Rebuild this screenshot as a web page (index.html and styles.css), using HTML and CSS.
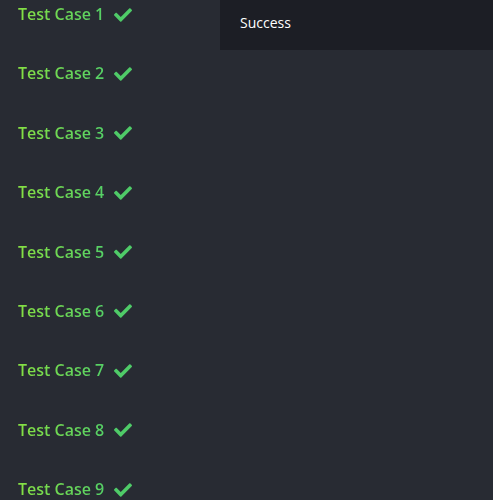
FILE: index.html
```html
<!DOCTYPE html>
<html>
<head>
<meta charset="utf-8">
<link rel="stylesheet" href="styles.css">
</head>
<body>
<div class="page">
  <ul class="cases">
    <li class="case"><span class="label">Test Case 1</span><svg class="check" viewBox="0 0 512 512"><path d="M173.9 439.4L7.5 273c-10-10-10-26.2 0-36.2l36.2-36.2c10-10 26.2-10 36.2 0L192 312.7 432.1 72.6c10-10 26.2-10 36.2 0l36.2 36.2c10 10 10 26.2 0 36.2L210.1 439.4c-10 10-26.2 10-36.2 0z"/></svg></li>
    <li class="case"><span class="label">Test Case 2</span><svg class="check" viewBox="0 0 512 512"><path d="M173.9 439.4L7.5 273c-10-10-10-26.2 0-36.2l36.2-36.2c10-10 26.2-10 36.2 0L192 312.7 432.1 72.6c10-10 26.2-10 36.2 0l36.2 36.2c10 10 10 26.2 0 36.2L210.1 439.4c-10 10-26.2 10-36.2 0z"/></svg></li>
    <li class="case"><span class="label">Test Case 3</span><svg class="check" viewBox="0 0 512 512"><path d="M173.9 439.4L7.5 273c-10-10-10-26.2 0-36.2l36.2-36.2c10-10 26.2-10 36.2 0L192 312.7 432.1 72.6c10-10 26.2-10 36.2 0l36.2 36.2c10 10 10 26.2 0 36.2L210.1 439.4c-10 10-26.2 10-36.2 0z"/></svg></li>
    <li class="case"><span class="label">Test Case 4</span><svg class="check" viewBox="0 0 512 512"><path d="M173.9 439.4L7.5 273c-10-10-10-26.2 0-36.2l36.2-36.2c10-10 26.2-10 36.2 0L192 312.7 432.1 72.6c10-10 26.2-10 36.2 0l36.2 36.2c10 10 10 26.2 0 36.2L210.1 439.4c-10 10-26.2 10-36.2 0z"/></svg></li>
    <li class="case"><span class="label">Test Case 5</span><svg class="check" viewBox="0 0 512 512"><path d="M173.9 439.4L7.5 273c-10-10-10-26.2 0-36.2l36.2-36.2c10-10 26.2-10 36.2 0L192 312.7 432.1 72.6c10-10 26.2-10 36.2 0l36.2 36.2c10 10 10 26.2 0 36.2L210.1 439.4c-10 10-26.2 10-36.2 0z"/></svg></li>
    <li class="case"><span class="label">Test Case 6</span><svg class="check" viewBox="0 0 512 512"><path d="M173.9 439.4L7.5 273c-10-10-10-26.2 0-36.2l36.2-36.2c10-10 26.2-10 36.2 0L192 312.7 432.1 72.6c10-10 26.2-10 36.2 0l36.2 36.2c10 10 10 26.2 0 36.2L210.1 439.4c-10 10-26.2 10-36.2 0z"/></svg></li>
    <li class="case"><span class="label">Test Case 7</span><svg class="check" viewBox="0 0 512 512"><path d="M173.9 439.4L7.5 273c-10-10-10-26.2 0-36.2l36.2-36.2c10-10 26.2-10 36.2 0L192 312.7 432.1 72.6c10-10 26.2-10 36.2 0l36.2 36.2c10 10 10 26.2 0 36.2L210.1 439.4c-10 10-26.2 10-36.2 0z"/></svg></li>
    <li class="case"><span class="label">Test Case 8</span><svg class="check" viewBox="0 0 512 512"><path d="M173.9 439.4L7.5 273c-10-10-10-26.2 0-36.2l36.2-36.2c10-10 26.2-10 36.2 0L192 312.7 432.1 72.6c10-10 26.2-10 36.2 0l36.2 36.2c10 10 10 26.2 0 36.2L210.1 439.4c-10 10-26.2 10-36.2 0z"/></svg></li>
    <li class="case"><span class="label">Test Case 9</span><svg class="check" viewBox="0 0 512 512"><path d="M173.9 439.4L7.5 273c-10-10-10-26.2 0-36.2l36.2-36.2c10-10 26.2-10 36.2 0L192 312.7 432.1 72.6c10-10 26.2-10 36.2 0l36.2 36.2c10 10 10 26.2 0 36.2L210.1 439.4c-10 10-26.2 10-36.2 0z"/></svg></li>
  </ul>
  <div class="result">
    <div class="result-bar">Success</div>
  </div>
</div>
</body>
</html>
```
FILE: styles.css
```css
html, body {
  margin: 0;
  padding: 0;
  background: #282b33;
  height: 100%;
  overflow: hidden;
}
.page {
  display: flex;
  align-items: flex-start;
  font-family: "Open Sans", "Noto Sans", sans-serif;
}
.cases {
  list-style: none;
  margin: 0;
  padding: 4px 0 0 18px;
  width: 202px;
  display: flex;
  flex-direction: column;
  gap: 38.4px;
}
.case {
  display: flex;
  align-items: center;
  height: 21px;
}
.label {
  font-size: 16px;
  font-weight: 600;
  line-height: 21px;
  background: linear-gradient(90deg, #86e044 0%, #55d066 100%);
  -webkit-background-clip: text;
  background-clip: text;
  color: transparent;
}
.check {
  width: 18px;
  height: 18px;
  margin-left: 10px;
  fill: #4fcb68;
}
.result {
  flex: 1;
}
.result-bar {
  background: #1c1e25;
  height: 50px;
  padding-left: 20px;
  display: flex;
  align-items: center;
  color: #ffffff;
  font-size: 14px;
  font-family: "Open Sans", "Noto Sans", sans-serif;
  padding-bottom: 5px;
  box-sizing: border-box;
}
```
